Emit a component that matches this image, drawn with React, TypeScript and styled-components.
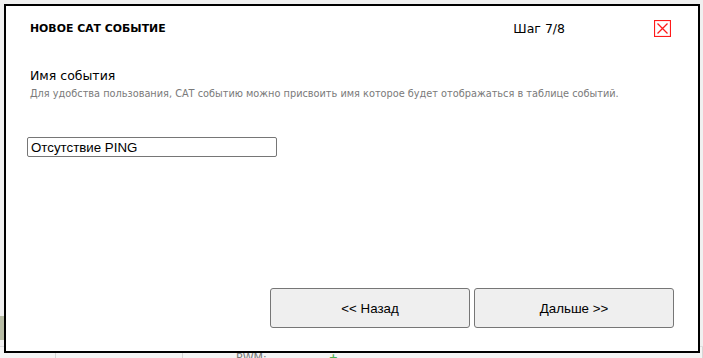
import React from "react";
import styled, { createGlobalStyle } from "styled-components";

const Global = createGlobalStyle`
  html, body { margin: 0; padding: 0; }
  body { width: 703px; height: 358px; overflow: hidden; background: #f0f0f0; }
  * { box-sizing: border-box; }
`;

const Page = styled.div`
  position: relative;
  width: 703px;
  height: 358px;
  display: flex;
  flex-direction: column;
  justify-content: flex-end;
  font-family: "DejaVu Sans", Verdana, sans-serif;
`;

const SideMark = styled.div`
  position: absolute;
  left: 0;
  top: 316px;
  width: 4px;
  height: 24px;
  background: #b8bda5;
`;

const BgRow = styled.div`
  display: grid;
  grid-template-columns: 56px 127px 1fr;
  height: 12px;
  background: #f4f4f4;
  border-top: 1px solid #ddd;
`;

const BgCell = styled.div<{ $pad?: boolean }>`
  border-right: 1px solid #d6d6d6;
  font-size: 11px;
  color: #777;
  line-height: 12px;
  padding: ${(p) => (p.$pad ? "5px 0 0 53px" : "0")};
  overflow: hidden;
  display: flex;
  gap: 62px;
`;

const Plus = styled.span`
  color: #4caf50;
  font-weight: bold;
`;

const Modal = styled.div`
  position: absolute;
  left: 4px;
  top: 4px;
  width: 696px;
  height: 349px;
  background: #fff;
  border: 2px solid #000;
  display: flex;
  flex-direction: column;
`;

const Header = styled.div`
  display: flex;
  align-items: center;
  height: 32px;
  margin-top: 6px;
  padding: 0 27px 0 24px;
`;

const Title = styled.div`
  flex: 1;
  font-family: "DejaVu Sans", Verdana, sans-serif;
  font-weight: bold;
  font-size: 10.9px;
  color: #000;
`;

const Step = styled.div`
  font-family: "DejaVu Sans", Verdana, sans-serif;
  font-size: 12.5px;
  color: #000;
`;

const CloseBtn = styled.button`
  margin-left: 89px;
  width: 17px;
  height: 17px;
  padding: 0;
  border: none;
  background: none;
  display: flex;
  cursor: pointer;
`;

const Body = styled.div`
  padding: 24px 24px 0 24px;
`;

const Label = styled.div`
  font-family: "DejaVu Sans", Verdana, sans-serif;
  font-size: 12.5px;
  color: #000;
`;

const Hint = styled.div`
  margin-top: 5px;
  font-family: "DejaVu Sans", Verdana, sans-serif;
  font-size: 9.75px;
  color: #7a7a7a;
`;

const Input = styled.input`
  display: block;
  margin: 38px 0 0 -3px;
  width: 250px;
  height: 20px;
  border: 1px solid #767676;
  border-radius: 2px;
  padding: 0 3px;
  font-family: "Liberation Sans", Arial, sans-serif;
  font-size: 13.3px;
  color: #000;
  outline: none;
`;

const Footer = styled.div`
  margin-top: auto;
  display: flex;
  justify-content: flex-end;
  gap: 4px;
  padding: 0 24px 23px 0;
`;

const Button = styled.button`
  width: 200px;
  height: 40px;
  background: #efefef;
  border: 1px solid #767676;
  border-radius: 3px;
  font-family: "Liberation Sans", Arial, sans-serif;
  font-size: 13.3px;
  color: #000;
  cursor: pointer;
`;

const CloseIcon = () => (
  <svg width="17" height="17" viewBox="0 0 17 17">
    <rect x="0.5" y="0.5" width="16" height="16" fill="none" stroke="#ff1a1a" strokeWidth="1.2" />
    <path d="M3.5 3.5 L13.5 13.5 M13.5 3.5 L3.5 13.5" stroke="#ff1a1a" strokeWidth="1.3" />
  </svg>
);

export default function App() {
  return (
    <>
      <Global />
      <Page>
        <SideMark />
        <BgRow>
          <BgCell />
          <BgCell />
          <BgCell $pad>
            <span>PWM:</span>
            <Plus>+</Plus>
          </BgCell>
        </BgRow>
        <Modal>
          <Header>
            <Title>НОВОЕ САТ СОБЫТИЕ</Title>
            <Step>Шаг 7/8</Step>
            <CloseBtn aria-label="Закрыть">
              <CloseIcon />
            </CloseBtn>
          </Header>
          <Body>
            <Label>Имя события</Label>
            <Hint>
              Для удобства пользования, САТ событию можно присвоить имя которое будет отображаться в таблице событий.
            </Hint>
            <Input defaultValue="Отсутствие PING" />
          </Body>
          <Footer>
            <Button>&lt;&lt; Назад</Button>
            <Button>Дальше &gt;&gt;</Button>
          </Footer>
        </Modal>
      </Page>
    </>
  );
}
